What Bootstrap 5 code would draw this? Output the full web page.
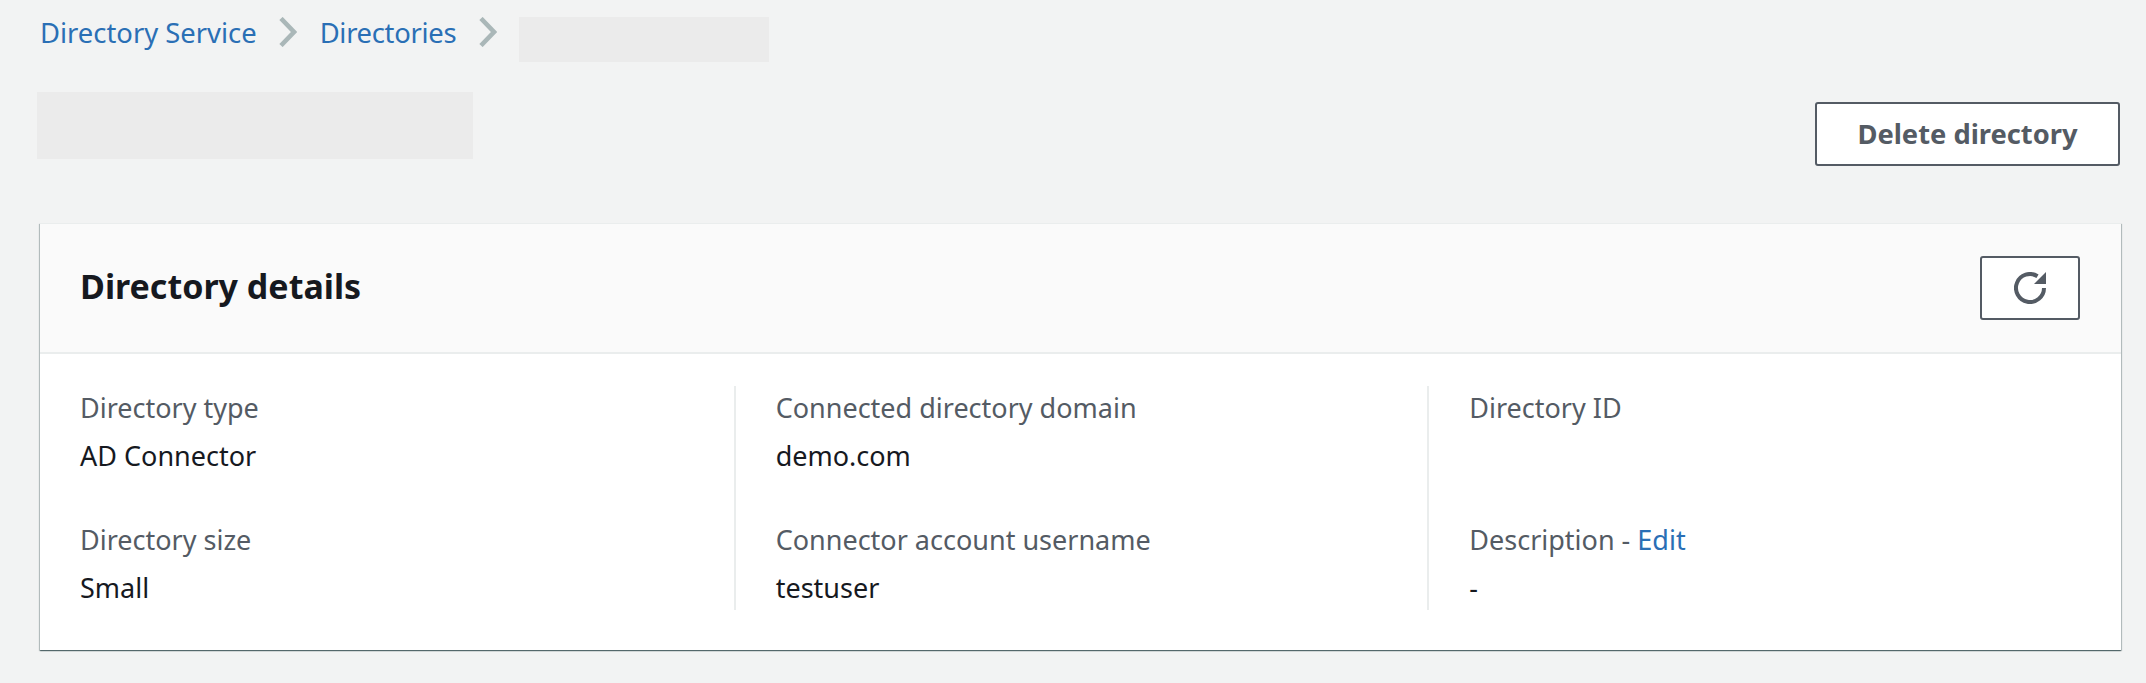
<!DOCTYPE html>
<html lang="en">
<head>
<meta charset="utf-8">
<title>Directory details</title>
<link href="https://cdn.jsdelivr.net/npm/bootstrap@5.3.0/dist/css/bootstrap.min.css" rel="stylesheet">
<style>
html, body { height: 100%; }
body { background: #f2f3f3; font-family: "Noto Sans", "Open Sans", sans-serif; font-size: 27px; color: #16191f; overflow: hidden; }
.page-shell { padding: 17px 25px 0 37px; }
.crumbs { height: 45px; margin-bottom: 30px; padding-left: 3px; gap: 22.5px; line-height: 32px; font-size: 27.4px; }
.crumbs a, .edit-link { color: #2a6fb5; text-decoration: none; }
.crumbs a.crumb-tight { letter-spacing: -.3px; }
.crumb-sep { width: 18px; height: 30px; flex: none; }
.crumb-blank { width: 250px; height: 45px; background: #ebebeb; flex: none; }
.head-row { height: 67px; margin-bottom: 64px; }
.title-blank { width: 436px; height: 67px; background: #ebebeb; }
.outline-btn { border: 2px solid #545b64; border-radius: 3px; background: #fff; color: #545b64; font-weight: 700; font-size: 27.3px; line-height: 1; padding: 0; display: flex; align-items: center; justify-content: center; }
.outline-btn:hover { background: #fff; color: #545b64; border-color: #545b64; }
.btn-delete { width: 305px; height: 64px; margin-top: 10px; margin-right: 1px; }
.btn-refresh { width: 100px; height: 64px; }
.info-panel { margin-left: 3px; background: #fff; box-shadow: 0 1px 1px 0 rgba(0,28,36,.45), 1px 1px 1px 0 rgba(0,28,36,.2), -1px 1px 1px 0 rgba(0,28,36,.2); border-top: 1px solid #eaeded; }
.panel-head { height: 130px; background: #fafafa; border-bottom: 2px solid #eaeded; padding: 0 41px 0 40px; }
.panel-title { font-size: 34px; font-weight: 700; color: #16191f; margin: 0 0 4px; line-height: 1; }
.panel-body { padding: 32px 0 40px; }
.info-col { padding: 0 41px 0 40px; height: 224px; }
.info-col + .info-col { border-left: 2px solid #eaeded; }
.info-label { color: #545b64; line-height: 44px; margin-bottom: 4px; }
.info-value { color: #16191f; line-height: 44px; height: 44px; margin-bottom: 40px; }
.info-value:last-child { margin-bottom: 0; }
</style>
</head>
<body>
<div class="page-shell">
  <nav class="crumbs d-flex align-items-start" aria-label="Breadcrumb">
    <a href="#">Directory Service</a>
    <svg class="crumb-sep" viewBox="0 0 18 30" aria-hidden="true"><path d="M2 1.5L15 15 2 28.5" fill="none" stroke="#aab7b8" stroke-width="4.6"/></svg>
    <a href="#" class="crumb-tight">Directories</a>
    <svg class="crumb-sep" viewBox="0 0 18 30" aria-hidden="true"><path d="M2 1.5L15 15 2 28.5" fill="none" stroke="#aab7b8" stroke-width="4.6"/></svg>
    <div class="crumb-blank"></div>
  </nav>
  <div class="head-row d-flex justify-content-between align-items-start">
    <div class="title-blank"></div>
    <button type="button" class="btn outline-btn btn-delete">Delete directory</button>
  </div>
  <section class="info-panel">
    <div class="panel-head d-flex justify-content-between align-items-center">
      <h2 class="panel-title">Directory details</h2>
      <button type="button" class="btn outline-btn btn-refresh" aria-label="Refresh">
        <svg width="32" height="32" viewBox="0 0 32 32" aria-hidden="true"><path d="M30 16A14 14 0 1 1 23.5 4.2" fill="none" stroke="#545b64" stroke-width="4"/><path d="M20 12H32V0z" fill="#545b64"/></svg>
      </button>
    </div>
    <div class="panel-body">
      <div class="row g-0">
        <div class="col-4 info-col">
          <div class="info-label">Directory type</div>
          <div class="info-value">AD Connector</div>
          <div class="info-label">Directory size</div>
          <div class="info-value">Small</div>
        </div>
        <div class="col-4 info-col">
          <div class="info-label">Connected directory domain</div>
          <div class="info-value">demo.com</div>
          <div class="info-label">Connector account username</div>
          <div class="info-value">testuser</div>
        </div>
        <div class="col-4 info-col">
          <div class="info-label">Directory ID</div>
          <div class="info-value"></div>
          <div class="info-label">Description - <a href="#" class="edit-link">Edit</a></div>
          <div class="info-value">-</div>
        </div>
      </div>
    </div>
  </section>
</div>
<script src="https://cdn.jsdelivr.net/npm/bootstrap@5.3.0/dist/js/bootstrap.bundle.min.js"></script>
</body>
</html>
